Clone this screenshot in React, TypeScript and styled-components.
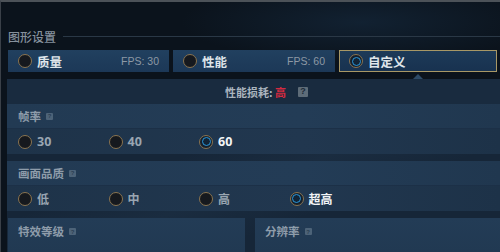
import React from "react";
import styled, { createGlobalStyle, css } from "styled-components";

const Global = createGlobalStyle`
  html, body { margin: 0; padding: 0; background: #0c141d; }
  body { font-family: "Noto Sans CJK SC", "Noto Sans", sans-serif; }
`;

const Frame = styled.div`
  width: 500px;
  height: 252px;
  box-sizing: border-box;
  border-top: 2px solid #4c5258;
  border-left: 1px solid #3a4048;
  background:
    radial-gradient(ellipse 180px 40px at 360px 20px, rgba(30, 60, 90, 0.35), transparent),
    #0b131c;
  overflow: hidden;
  display: flex;
  flex-direction: column;
`;

const TitleRow = styled.div`
  display: flex;
  align-items: center;
  gap: 7px;
  margin-top: 27px;
  padding-left: 7px;
  height: 14px;
`;

const Title = styled.span`
  font-size: 12px;
  color: #85909c;
  font-weight: 500;
  white-space: nowrap;
`;

const Rule = styled.div`
  flex: 1;
  height: 1px;
  background: #2a3846;
`;

const Tabs = styled.div`
  display: grid;
  grid-template-columns: 161px 162px 158px;
  gap: 4px;
  margin-top: 7px;
  padding-left: 7px;
`;

const Tab = styled.div<{ $active?: boolean }>`
  position: relative;
  height: 22px;
  box-sizing: border-box;
  display: flex;
  align-items: center;
  padding: 0 10px 0 10px;
  gap: 5px;
  background: linear-gradient(#21405f, #1c3857);
  ${(p) =>
    p.$active &&
    css`
      border: 1px solid #a89866;
      padding-left: 9px;
      background: linear-gradient(#1d3a58, #183250);
    `}
`;

const TabLabel = styled.span`
  font-size: 12.5px;
  font-weight: 700;
  color: #dfe5ea;
  flex: 1;
`;

const Fps = styled.span`
  font-family: "Liberation Sans", Arial, sans-serif;
  font-size: 10.5px;
  color: #8d99a5;
`;

const Caret = styled.div`
  position: absolute;
  left: 50%;
  bottom: -8px;
  margin-left: -5px;
  width: 0;
  height: 0;
  border-left: 5px solid transparent;
  border-right: 5px solid transparent;
  border-bottom: 5px solid #2d4a66;
`;

const Panel = styled.div`
  margin-top: 7px;
  margin-left: 6px;
  flex: 1;
  display: flex;
  flex-direction: column;
  background:
    linear-gradient(160deg, transparent 40%, rgba(90, 140, 190, 0.06) 55%, transparent 70%),
    #162638;
`;

const PerfRow = styled.div`
  height: 25px;
  display: flex;
  align-items: center;
  justify-content: center;
  gap: 6px;
  background: #192b3f;
  padding-left: 26px;
`;

const PerfText = styled.span`
  font-size: 11px;
  font-weight: 700;
  color: #aab4be;
`;

const High = styled.span`
  color: #d42a40;
`;

const Help = styled.span<{ $big?: boolean }>`
  display: inline-flex;
  align-items: center;
  justify-content: center;
  width: ${(p) => (p.$big ? 10 : 7)}px;
  height: ${(p) => (p.$big ? 10 : 7)}px;
  background: ${(p) => (p.$big ? "#5e6c78" : "#4d6378")};
  color: ${(p) => (p.$big ? "#1c2a38" : "#2a3e52")};
  font-family: "Liberation Sans", Arial, sans-serif;
  font-size: ${(p) => (p.$big ? 9 : 6)}px;
  font-weight: 700;
  line-height: 1;
  border-radius: 1px;
  margin-left: ${(p) => (p.$big ? 6 : 0)}px;
`;

const Section = styled.div`
  display: flex;
  flex-direction: column;
  margin-bottom: 7px;
`;

const SectionHeader = styled.div`
  height: 24px;
  display: flex;
  align-items: center;
  gap: 5px;
  padding-left: 11px;
  background: linear-gradient(90deg, #223a53, #233c56 60%, #20374f);
  border-bottom: 1px solid #1c3047;
`;

const SectionTitle = styled.span`
  font-size: 11.5px;
  font-weight: 700;
  color: #8e9caa;
`;

const Options = styled.div`
  height: 25px;
  display: grid;
  grid-template-columns: repeat(4, 90.5px);
  align-items: center;
  padding-left: 11px;
  background: linear-gradient(90deg, #1e3349, #21374f 60%, #1d3248);
`;

const Option = styled.div`
  display: flex;
  align-items: center;
  gap: 5px;
`;

const Radio = styled.span<{ $on?: boolean }>`
  width: 14px;
  height: 14px;
  box-sizing: border-box;
  border-radius: 50%;
  border: 1.5px solid #8a7450;
  background: #16191e;
  display: inline-flex;
  align-items: center;
  justify-content: center;
  flex-shrink: 0;
  ${(p) =>
    p.$on &&
    css`
      background: #15202c;
      &::after {
        content: "";
        width: 7px;
        height: 7px;
        border-radius: 50%;
        border: 1.5px solid #2a98dc;
        background: #122436;
      }
    `}
`;

const OptLabel = styled.span<{ $on?: boolean }>`
  font-size: 12px;
  font-weight: 700;
  color: ${(p) => (p.$on ? "#f2f4f6" : "#99a5b1")};
`;

const NumLabel = styled(OptLabel)`
  font-family: "Open Sans", "Noto Sans", sans-serif;
  font-size: 12.5px;
`;

const Split = styled.div`
  display: grid;
  grid-template-columns: 237px 1fr;
  gap: 10px;
  flex: 1;
  margin-left: 1px;
`;

const SubPanel = styled.div`
  display: flex;
  align-items: flex-start;
  padding: 5px 0 0 10px;
  gap: 5px;
  background: linear-gradient(#233c56, #213952);
`;

const SubHelp = styled(Help)`
  margin-top: 5px;
`;

type Opt = { label: string; on?: boolean };

const RadioGroup: React.FC<{ opts: Opt[]; numeric?: boolean }> = ({ opts, numeric }) => (
  <Options>
    {opts.map((o) => (
      <Option key={o.label}>
        <Radio $on={o.on} />
        {numeric ? (
          <NumLabel $on={o.on}>{o.label}</NumLabel>
        ) : (
          <OptLabel $on={o.on}>{o.label}</OptLabel>
        )}
      </Option>
    ))}
  </Options>
);

export default function App() {
  return (
    <>
      <Global />
      <Frame>
        <TitleRow>
          <Title>图形设置</Title>
          <Rule />
        </TitleRow>
        <Tabs>
          <Tab>
            <Radio />
            <TabLabel>质量</TabLabel>
            <Fps>FPS: 30</Fps>
          </Tab>
          <Tab>
            <Radio />
            <TabLabel>性能</TabLabel>
            <Fps>FPS: 60</Fps>
          </Tab>
          <Tab $active>
            <Radio $on />
            <TabLabel>自定义</TabLabel>
            <Caret />
          </Tab>
        </Tabs>
        <Panel>
          <PerfRow>
            <PerfText>
              性能损耗: <High>高</High>
            </PerfText>
            <Help $big>?</Help>
          </PerfRow>
          <Section>
            <SectionHeader>
              <SectionTitle>帧率</SectionTitle>
              <Help>?</Help>
            </SectionHeader>
            <RadioGroup numeric opts={[{ label: "30" }, { label: "40" }, { label: "60", on: true }]} />
          </Section>
          <Section>
            <SectionHeader>
              <SectionTitle>画面品质</SectionTitle>
              <Help>?</Help>
            </SectionHeader>
            <RadioGroup
              opts={[{ label: "低" }, { label: "中" }, { label: "高" }, { label: "超高", on: true }]}
            />
          </Section>
          <Split>
            <SubPanel>
              <SectionTitle>特效等级</SectionTitle>
              <SubHelp>?</SubHelp>
            </SubPanel>
            <SubPanel>
              <SectionTitle>分辨率</SectionTitle>
              <SubHelp>?</SubHelp>
            </SubPanel>
          </Split>
        </Panel>
      </Frame>
    </>
  );
}
